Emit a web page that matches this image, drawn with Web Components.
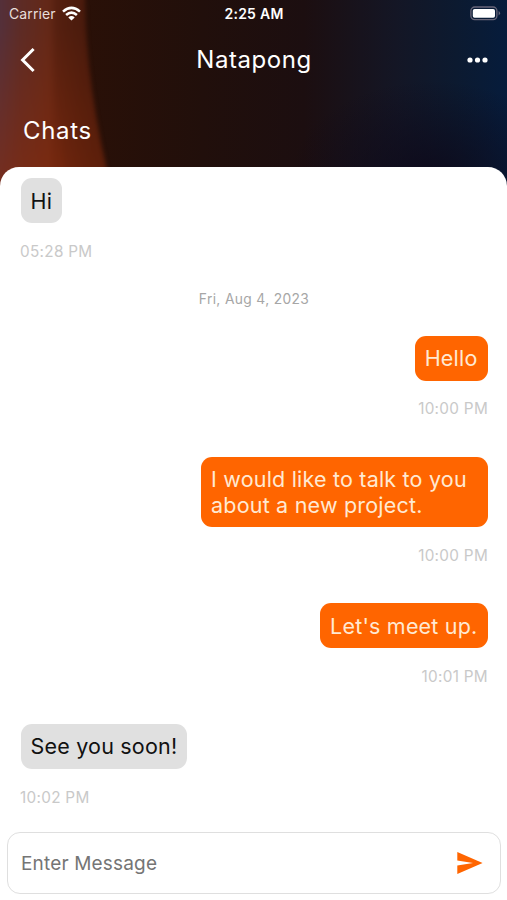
<!DOCTYPE html>
<html lang="en">
<head>
<meta charset="utf-8">
<meta name="viewport" content="width=device-width, initial-scale=1">
<title>Chats</title>
<style>
  body {
    margin: 0;
    background: #fff;
    font-family: Inter, "Liberation Sans", sans-serif;
  }
</style>
</head>
<body>
  <chat-screen>
    <status-bar slot="header" carrier="Carrier" time="2:25 AM"></status-bar>
    <nav-bar slot="header">Natapong</nav-bar>
    <section-title slot="header">Chats</section-title>

    <chat-message time="05:28 PM">Hi</chat-message>
    <date-divider>Fri, Aug 4, 2023</date-divider>
    <chat-message mine time="10:00 PM">Hello</chat-message>
    <chat-message mine time="10:00 PM">I would like to talk to you about a new project.</chat-message>
    <chat-message mine time="10:01 PM">Let's meet up.</chat-message>
    <chat-message time="10:02 PM">See you soon!</chat-message>

    <message-input slot="footer">Enter Message</message-input>
  </chat-screen>

<script>
  function attach(element, html) {
    const template = document.createElement('template');
    template.innerHTML = html;
    element.attachShadow({ mode: 'open' });
    element.shadowRoot.appendChild(template.content.cloneNode(true));
  }

  class ChatScreen extends HTMLElement {
    constructor() {
      super();
      attach(this, `
        <style>
          :host {
            display: flex;
            flex-direction: column;
            height: 900px;
            overflow: hidden;
          }
          header {
            display: grid;
            height: 190px;
            flex: none;
          }
          .wallpaper, .bars {
            grid-area: 1 / 1;
            min-width: 0;
          }
          .wallpaper {
            width: 100%;
            height: 190px;
            display: block;
          }
          .bars { z-index: 1; }
          main {
            flex: 1;
            min-height: 0;
            display: flex;
            flex-direction: column;
            box-sizing: border-box;
            margin-top: -23px;
            padding: 11.3px 19.5px 0 20.5px;
            border-radius: 19px 19px 0 0;
            background: #fff;
            z-index: 2;
          }
          footer {
            flex: none;
            padding: 0 6px 6px 7px;
            z-index: 3;
          }
        </style>
        <header>
          <svg class="wallpaper" viewBox="0 0 507 190" preserveAspectRatio="none">
            <defs>
              <linearGradient id="base" x1="0" y1="0" x2="1" y2="0">
                <stop offset="0.15" stop-color="#2a1007"/>
                <stop offset="0.4" stop-color="#210f0b"/>
                <stop offset="0.6" stop-color="#1c0e10"/>
                <stop offset="0.78" stop-color="#141625"/>
                <stop offset="0.9" stop-color="#0c1a30"/>
                <stop offset="1" stop-color="#061c3c"/>
              </linearGradient>
              <linearGradient id="planet" x1="0" y1="0" x2="1" y2="0">
                <stop offset="0.15" stop-color="#54303a"/>
                <stop offset="0.3" stop-color="#5d2b25"/>
                <stop offset="0.5" stop-color="#642817"/>
                <stop offset="0.56" stop-color="#562010"/>
                <stop offset="0.8" stop-color="#4a1b0d"/>
                <stop offset="1" stop-color="#451809"/>
              </linearGradient>
              <linearGradient id="glow" x1="0" y1="0" x2="0" y2="1">
                <stop offset="0.2" stop-color="#8b2c0c" stop-opacity="0"/>
                <stop offset="1" stop-color="#8b2c0c" stop-opacity="0.7"/>
              </linearGradient>
              <radialGradient id="shade" cx="0.5" cy="0.5" r="0.5">
                <stop offset="0" stop-color="#0d0717" stop-opacity="0.75"/>
                <stop offset="1" stop-color="#0d0717" stop-opacity="0"/>
              </radialGradient>
              <linearGradient id="fade" x1="0" y1="0" x2="1" y2="0">
                <stop offset="0" stop-color="#451809" stop-opacity="0"/>
                <stop offset="1" stop-color="#451809" stop-opacity="0.5"/>
              </linearGradient>
            </defs>
            <rect width="507" height="190" fill="url(#base)"/>
            <ellipse cx="430" cy="175" rx="140" ry="95" fill="url(#shade)"/>
            <g style="filter: blur(2px)">
              <path d="M-20-20H85Q83 85 117 210H-20Z" fill="url(#planet)"/>
              <path d="M-20-20H85Q83 85 117 210H-20Z" fill="url(#glow)"/>
              <path d="M50-20H85Q83 85 117 210H72Q50 90 50-20Z" fill="url(#fade)"/>
            </g>
          </svg>
          <div class="bars"><slot name="header"></slot></div>
        </header>
        <main><slot></slot></main>
        <footer><slot name="footer"></slot></footer>
      `);
    }
  }
  customElements.define('chat-screen', ChatScreen);

  class StatusBar extends HTMLElement {
    constructor() {
      super();
      attach(this, `
        <style>
          :host {
            display: grid;
            grid-template-columns: 1fr auto 1fr;
            align-items: center;
            height: 27px;
            padding: 0 6px 0 9px;
            color: #fff;
            font-size: 14px;
            line-height: 27px;
          }
          .left {
            display: flex;
            align-items: center;
            gap: 6px;
          }
          .carrier {
            color: #e8dedb;
            letter-spacing: 0.1px;
          }
          .time {
            font-weight: 600;
            font-size: 14px;
            letter-spacing: 0.25px;
            margin-right: 2px;
          }
          .battery { justify-self: end; }
          svg { display: block; }
        </style>
        <div class="left">
          <span class="carrier"></span>
          <svg width="19" height="15" viewBox="0 0 19 15" fill="none" stroke="#fff" stroke-width="2.6">
            <path d="M1 5.6Q9.5-1.9 18 5.6"/>
            <path d="M4.1 9Q9.5 4.2 14.9 9"/>
            <path d="M6.3 11.5Q9.5 8.6 12.7 11.5L9.5 14.6Z" fill="#fff" stroke="none"/>
          </svg>
        </div>
        <span class="time"></span>
        <svg class="battery" width="31" height="15" viewBox="0 0 31 15">
          <rect x="0.9" y="1" width="26" height="12.6" rx="3.8" fill="none" stroke="#686679" stroke-width="1.3"/>
          <rect x="2.8" y="2.9" width="22.2" height="8.8" rx="1.8" fill="#fff"/>
          <path d="M28.6 5.1Q31.6 7.3 28.6 9.5Z" fill="#686679"/>
        </svg>
      `);
    }

    connectedCallback() {
      this.shadowRoot.querySelector('.carrier').textContent = this.getAttribute('carrier');
      this.shadowRoot.querySelector('.time').textContent = this.getAttribute('time');
    }
  }
  customElements.define('status-bar', StatusBar);

  class NavBar extends HTMLElement {
    constructor() {
      super();
      attach(this, `
        <style>
          :host {
            display: grid;
            grid-template-columns: 1fr auto 1fr;
            align-items: center;
            height: 65px;
            padding: 0 19px 0 20px;
            color: #fff;
            font-size: 24px;
            letter-spacing: 0.55px;
          }
          svg { display: block; }
          .more { justify-self: end; }
          span {
            line-height: 28px;
            margin-top: 1px;
          }
        </style>
        <svg width="16" height="26" viewBox="0 0 16 26" fill="none" stroke="#fff" stroke-width="3">
          <path d="M13.6 2L2.6 13L13.6 24"/>
        </svg>
        <span><slot></slot></span>
        <svg class="more" width="21" height="6" viewBox="0 0 21 6" fill="#fff">
          <circle cx="3" cy="3" r="2.6"/>
          <circle cx="10.5" cy="3" r="2.6"/>
          <circle cx="18" cy="3" r="2.6"/>
        </svg>
      `);
    }
  }
  customElements.define('nav-bar', NavBar);

  class SectionTitle extends HTMLElement {
    constructor() {
      super();
      attach(this, `
        <style>
          :host {
            display: block;
            padding: 24px 23px 0;
            color: #fff;
            font-size: 24px;
            line-height: 30px;
            letter-spacing: 0.7px;
          }
        </style>
        <slot></slot>
      `);
    }
  }
  customElements.define('section-title', SectionTitle);

  class ChatMessage extends HTMLElement {
    constructor() {
      super();
      attach(this, `
        <style>
          :host {
            display: flex;
            flex: none;
            flex-direction: column;
            align-items: flex-start;
            padding-bottom: 38.4px;
          }
          :host([mine]) { align-items: flex-end; }
          .bubble {
            box-sizing: border-box;
            max-width: 286.5px;
            padding: 10.3px 10px 9.1px;
            border-radius: 11px;
            background: #e0e0e0;
            color: #111;
            font-size: 21.5px;
            line-height: 25.6px;
            letter-spacing: 0.2px;
          }
          :host([mine]) .bubble {
            background: #ff6500;
            color: #ffe9d2;
          }
          .time {
            margin: 19.5px -0.5px 0;
            color: #c9c9c9;
            font-size: 15.3px;
            line-height: 18px;
            letter-spacing: 0.3px;
          }
        </style>
        <div class="bubble"><slot></slot></div>
        <div class="time"></div>
      `);
    }

    connectedCallback() {
      this.shadowRoot.querySelector('.time').textContent = this.getAttribute('time');
    }
  }
  customElements.define('chat-message', ChatMessage);

  class DateDivider extends HTMLElement {
    constructor() {
      super();
      attach(this, `
        <style>
          :host {
            display: block;
            flex: none;
            margin-top: -9.4px;
            height: 46.2px;
            color: #a6a6a6;
            font-size: 13.8px;
            line-height: 18px;
            letter-spacing: 0.35px;
            text-align: center;
          }
        </style>
        <slot></slot>
      `);
    }
  }
  customElements.define('date-divider', DateDivider);

  class MessageInput extends HTMLElement {
    constructor() {
      super();
      attach(this, `
        <style>
          :host {
            display: flex;
            align-items: center;
            justify-content: space-between;
            box-sizing: border-box;
            height: 62px;
            padding: 0 17px 0 13px;
            border: 1px solid #dfdfdf;
            border-radius: 13px;
            background: #fff;
            color: #757575;
            font-size: 19px;
            letter-spacing: 0.17px;
          }
          svg { display: block; }
        </style>
        <span><slot></slot></span>
        <svg width="26" height="22" viewBox="0 0 26 22" fill="#ff6500">
          <path d="M0.3 0L25.6 11L0.3 22V13.5L16 11L0.3 8.5Z"/>
        </svg>
      `);
    }
  }
  customElements.define('message-input', MessageInput);
</script>
</body>
</html>
